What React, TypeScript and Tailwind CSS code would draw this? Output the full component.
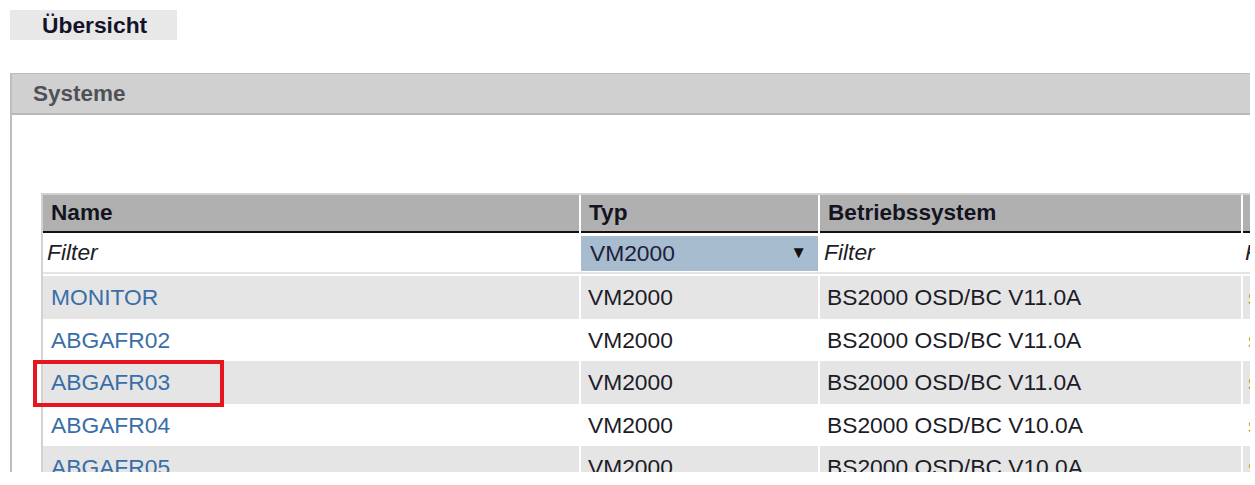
import React from "react";

const rows = [
  { name: "MONITOR", typ: "VM2000", bs: "BS2000 OSD/BC V11.0A" },
  { name: "ABGAFR02", typ: "VM2000", bs: "BS2000 OSD/BC V11.0A" },
  { name: "ABGAFR03", typ: "VM2000", bs: "BS2000 OSD/BC V11.0A" },
  { name: "ABGAFR04", typ: "VM2000", bs: "BS2000 OSD/BC V10.0A" },
  { name: "ABGAFR05", typ: "VM2000", bs: "BS2000 OSD/BC V10.0A" },
];

const cols = "grid grid-cols-[536px_237px_421px_200px] gap-x-[2px]";

export default function App() {
  return (
    <div
      className="relative w-[1255px] h-[485px] overflow-hidden bg-white text-[#1e1e1e]"
      style={{ fontFamily: '"Liberation Sans", Arial, sans-serif' }}
    >
      <div className="w-[1250px] h-[472px] overflow-hidden">
        <div className="pt-[10px] pl-[10px]">
          <div className="w-[167px] h-[30px] bg-[#e8e8e8] pl-[32px] text-[22.8px] leading-[30px] font-bold text-[#141428]">
            Übersicht
          </div>
        </div>
        <div className="ml-[10px] mt-[33px] border-l-2 border-t border-[#bdbdbd]">
          <div className="h-[41px] bg-[#d0d0d0] border-b-2 border-[#b8b8b8] pl-[21px] text-[22.5px] leading-[39px] font-bold text-[#505058]">
            Systeme
          </div>
          <div className="pl-[29px] pt-[78px]">
            <div className="border-l-2 border-t-2 border-[#d2d2d2]">
              <div className={`${cols} bg-white`}>
                {["Name", "Typ", "Betriebssystem", ""].map((h, i) => (
                  <div
                    key={i}
                    className="h-[38px] bg-[#b0b0b0] border-b-2 border-[#111] pl-[8px] text-[22.6px] leading-[36px] font-bold text-[#14141e] whitespace-nowrap"
                  >
                    {h}
                  </div>
                ))}
              </div>
              <div className={`${cols} bg-white h-[39px] items-center`}>
                <div className="pl-[4px] text-[22.8px] italic text-[#1e1e2a]">Filter</div>
                <div className="h-[35px] mt-[1px] bg-[#a7bccf] flex items-center justify-between pl-[9px] pr-[11px] text-[22.8px] text-[#20203a]">
                  <span>VM2000</span>
                  <span className="text-[17px] text-[#111]">▼</span>
                </div>
                <div className="pl-[4px] text-[22.8px] italic text-[#1e1e2a]">Filter</div>
                <div className="pl-[2px] text-[22.8px] italic text-[#1e1e2a]">Filter</div>
              </div>
              <div className="h-[2px] bg-[#e4e4e4]" />
              <div className="h-[2px] bg-white" />
              {rows.map((r, i) => (
                <div key={r.name} className={`${cols} bg-white`}>
                  {[r.name, r.typ, r.bs, "s"].map((c, j) => (
                    <div
                      key={j}
                      className={`h-[42.5px] flex items-center whitespace-nowrap text-[22.8px] ${
                        i % 2 === 0 ? "bg-[#e5e5e5]" : "bg-white"
                      } ${j === 0 ? "pl-[8px] text-[#3a6ea8]" : j === 3 ? "pl-[5px] text-[#c08a30]" : "pl-[7px] text-[#1c1c28]"}`}
                    >
                      {c}
                    </div>
                  ))}
                </div>
              ))}
            </div>
          </div>
        </div>
      </div>
      <div className="absolute left-[33px] top-[360px] w-[191px] h-[47px] border-4 border-[#e5161e]" />
    </div>
  );
}
